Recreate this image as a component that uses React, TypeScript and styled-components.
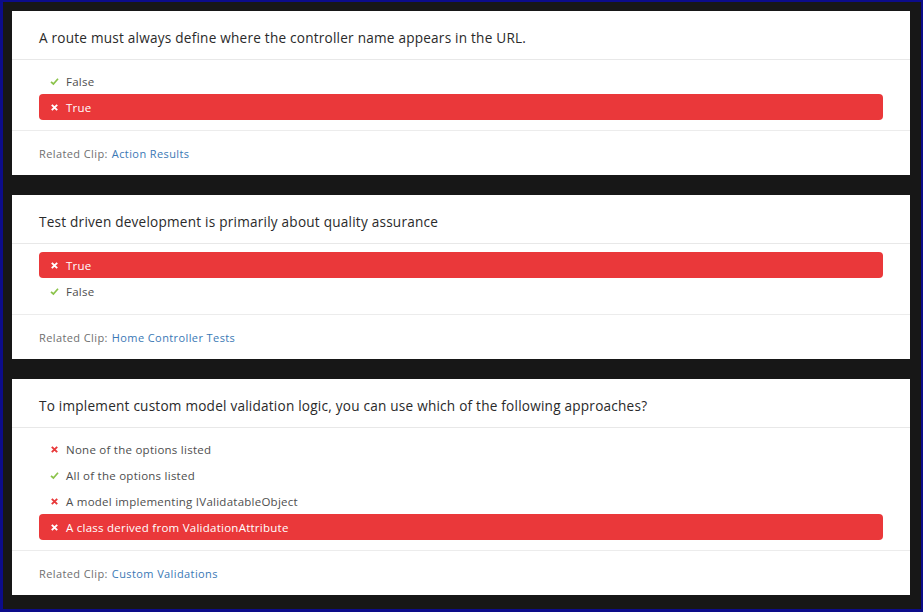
import React from "react";
import styled, { createGlobalStyle } from "styled-components";

const Global = createGlobalStyle`
  html, body { margin: 0; padding: 0; background: #171717; }
  body { font-family: "Open Sans", "Liberation Sans", sans-serif; }
`;

const Frame = styled.div`
  box-sizing: border-box;
  width: 923px;
  height: 612px;
  border: 2px solid #0c0c8a;
  border-left-width: 3px;
  border-bottom-width: 3px;
  background: #171717;
  padding: 9px 11px 0 9px;
  display: flex;
  flex-direction: column;
  gap: 20px;
  overflow: hidden;
`;

const Card = styled.section`
  background: #ffffff;
  display: flex;
  flex-direction: column;
`;

const Question = styled.div`
  height: 49px;
  box-sizing: border-box;
  border-bottom: 1px solid #e8e8e8;
  padding: 5px 27px 0;
  display: flex;
  align-items: center;
  font-size: 13.6px;
  color: #2a2a2a;
  letter-spacing: 0.22px;
`;

const Options = styled.ul`
  list-style: none;
  margin: 0;
  padding: 8px 27px 10px;
  border-bottom: 1px solid #ececec;
  display: flex;
  flex-direction: column;
`;

const Option = styled.li<{ $wrong: boolean }>`
  height: 26px;
  display: flex;
  align-items: center;
  gap: 7px;
  padding: 0 11px;
  border-radius: 4px;
  font-size: 11.5px;
  letter-spacing: 0.25px;
  color: ${(p) => (p.$wrong ? "#ffffff" : "#4e4e4e")};
  background: ${(p) => (p.$wrong ? "#ea383a" : "transparent")};
`;

const Footer = styled.div`
  height: 44px;
  padding: 0 27px;
  display: flex;
  align-items: center;
  font-size: 11px;
  letter-spacing: 0.4px;
  color: #6f6f6f;
  gap: 4px;
`;

const Link = styled.a`
  color: #3a78b5;
  text-decoration: none;
`;

const IconBox = styled.span`
  width: 9px;
  height: 9px;
  display: inline-flex;
  flex: none;
`;

const Check = () => (
  <IconBox>
    <svg width="9" height="9" viewBox="0 0 9 9">
      <path d="M1 4.8 L3.4 7 L8 1.8" fill="none" stroke="#8bc34a" strokeWidth="1.7" />
    </svg>
  </IconBox>
);

const Cross = ({ color }: { color: string }) => (
  <IconBox>
    <svg width="9" height="9" viewBox="0 0 9 9">
      <path d="M1.8 1.8 L7.2 7.2 M7.2 1.8 L1.8 7.2" fill="none" stroke={color} strokeWidth="1.9" />
    </svg>
  </IconBox>
);

type Opt = { text: string; correct: boolean; selected: boolean };
type Q = { question: string; options: Opt[]; clip: string };

const data: Q[] = [
  {
    question: "A route must always define where the controller name appears in the URL.",
    options: [
      { text: "False", correct: true, selected: false },
      { text: "True", correct: false, selected: true },
    ],
    clip: "Action Results",
  },
  {
    question: "Test driven development is primarily about quality assurance",
    options: [
      { text: "True", correct: false, selected: true },
      { text: "False", correct: true, selected: false },
    ],
    clip: "Home Controller Tests",
  },
  {
    question: "To implement custom model validation logic, you can use which of the following approaches?",
    options: [
      { text: "None of the options listed", correct: false, selected: false },
      { text: "All of the options listed", correct: true, selected: false },
      { text: "A model implementing IValidatableObject", correct: false, selected: false },
      { text: "A class derived from ValidationAttribute", correct: false, selected: true },
    ],
    clip: "Custom Validations",
  },
];

export default function App() {
  return (
    <Frame>
      <Global />
      {data.map((q, i) => (
        <Card key={i}>
          <Question>{q.question}</Question>
          <Options>
            {q.options.map((o, j) => (
              <Option key={j} $wrong={o.selected && !o.correct}>
                {o.correct ? <Check /> : <Cross color={o.selected ? "#ffffff" : "#e8393a"} />}
                {o.text}
              </Option>
            ))}
          </Options>
          <Footer>
            Related Clip: <Link href="#">{q.clip}</Link>
          </Footer>
        </Card>
      ))}
    </Frame>
  );
}
